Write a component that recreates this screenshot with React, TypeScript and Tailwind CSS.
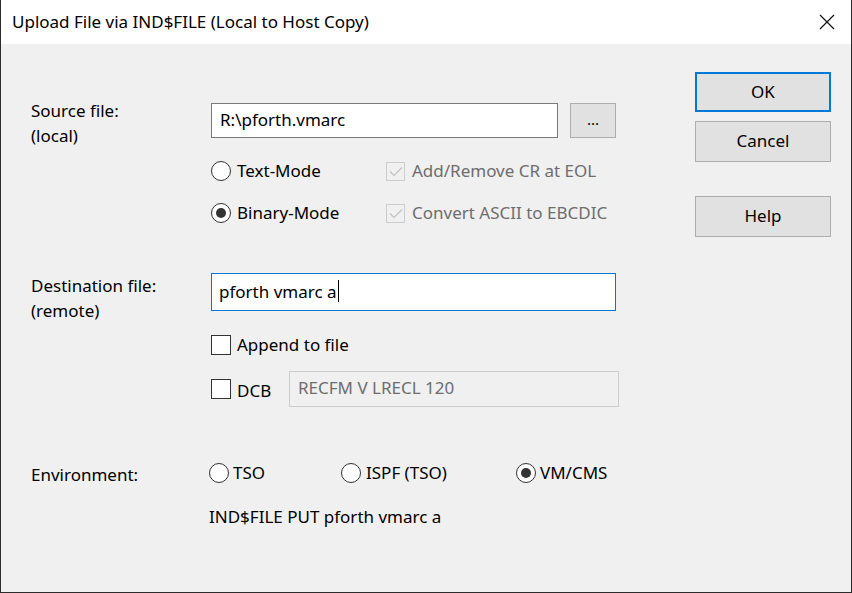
import React from "react";

function Radio({ checked }: { checked?: boolean }) {
  return (
    <span className="w-[20px] h-[20px] shrink-0 rounded-full border border-[#333333] bg-white flex items-center justify-center">
      {checked && <span className="w-[10px] h-[10px] rounded-full bg-[#333333]" />}
    </span>
  );
}

function Box() {
  return <span className="w-[20px] h-[20px] shrink-0 border border-[#333333] bg-white" />;
}

function DisabledCheck() {
  return (
    <span className="w-[19px] h-[19px] shrink-0 border border-[#cccccc] flex items-center justify-center">
      <svg width="14" height="11" viewBox="0 0 14 11">
        <path d="M1 5.5 L5 9.5 L13 1.5" stroke="#c2c2c2" strokeWidth="1.2" fill="none" />
      </svg>
    </span>
  );
}

function DlgButton({ label, focused }: { label: string; focused?: boolean }) {
  return (
    <button
      className={
        focused
          ? "w-[136px] h-[40px] pb-[2px] bg-[#e1e1e1] border-2 border-[#0078d7] text-black"
          : "w-[136px] h-[41px] pb-[2px] bg-[#e1e1e1] border border-[#adadad] text-black"
      }
    >
      {label}
    </button>
  );
}

export default function App() {
  return (
    <div className="w-[852px] h-[593px] flex flex-col border-x border-b border-[#2b2b2b] font-['Noto_Sans',sans-serif] text-[17px] leading-[25px] text-black">
      {/* Title bar */}
      <div className="h-[44px] bg-white flex items-center justify-between pl-[11px] pr-[16px] shrink-0">
        <span className="pb-[1px]">Upload File via IND$FILE (Local to Host Copy)</span>
        <svg width="16" height="16" viewBox="0 0 16 16">
          <path d="M1 1 L15 15 M15 1 L1 15" stroke="#111" strokeWidth="1.2" />
        </svg>
      </div>

      {/* Body */}
      <div className="flex-1 bg-[#f0f0f0] flex">
        <div className="flex-1 pl-[30px] pt-[54px] flex flex-col">
          {/* Source file */}
          <div className="flex">
            <div className="w-[180px] shrink-0">
              <div>Source file:</div>
              <div>(local)</div>
            </div>
            <div className="flex flex-col">
              <div className="flex mt-[5px]">
                <div className="w-[347px] h-[35px] pb-[3px] bg-white border border-[#7a7a7a] flex items-center px-[8px]">
                  R:\pforth.vmarc
                </div>
                <button className="ml-[12px] w-[46px] h-[35px] pb-[2px] bg-[#e1e1e1] border border-[#adadad] text-[15px]">...</button>
              </div>
              <div className="grid grid-cols-[175px_auto] gap-y-[22px] mt-[23px]">
                <div className="flex items-center gap-[6px] h-[20px]">
                  <Radio />
                  <span className="pb-[2px]">Text-Mode</span>
                </div>
                <div className="flex items-center gap-[7px] h-[20px] text-[#6d6d6d]">
                  <DisabledCheck />
                  <span className="pb-[2px]">Add/Remove CR at EOL</span>
                </div>
                <div className="flex items-center gap-[6px] h-[20px]">
                  <Radio checked />
                  <span className="pb-[2px]">Binary-Mode</span>
                </div>
                <div className="flex items-center gap-[7px] h-[20px] text-[#6d6d6d]">
                  <DisabledCheck />
                  <span className="pb-[2px]">Convert ASCII to EBCDIC</span>
                </div>
              </div>
            </div>
          </div>

          {/* Destination file */}
          <div className="flex mt-[50px]">
            <div className="w-[180px] shrink-0">
              <div>Destination file:</div>
              <div>(remote)</div>
            </div>
            <div className="flex flex-col">
              <div className="w-[405px] h-[38px] pb-[2px] bg-white border border-[#0078d7] flex items-center px-[7px]">
                <span>pforth vmarc a</span>
                <span className="w-px h-[22px] bg-black ml-[1px]" />
              </div>
              <div className="flex items-center gap-[6px] h-[20px] mt-[24px]">
                <Box />
                <span className="pb-[2px]">Append to file</span>
              </div>
              <div className="flex items-center mt-[16px]">
                <Box />
                <span className="ml-[6px] w-[52px] pt-[2px]">DCB</span>
                <div className="w-[330px] h-[36px] pb-[3px] border border-[#cccccc] flex items-center px-[8px] text-[#6d6d6d]">
                  RECFM V LRECL 120
                </div>
              </div>
            </div>
          </div>

          {/* Environment */}
          <div className="flex items-center mt-[56px] h-[20px]">
            <div className="w-[178px] shrink-0 mt-[3px]">Environment:</div>
            <div className="flex items-center gap-[4px] w-[132px]">
              <Radio />
              <span className="pb-[2px]">TSO</span>
            </div>
            <div className="flex items-center gap-[5px] w-[175px]">
              <Radio />
              <span className="pb-[2px]">ISPF (TSO)</span>
            </div>
            <div className="flex items-center gap-[4px]">
              <Radio checked />
              <span className="pb-[2px]">VM/CMS</span>
            </div>
          </div>
          <div className="ml-[178px] mt-[21px]">IND$FILE PUT pforth vmarc a</div>
        </div>

        {/* Buttons */}
        <div className="w-[136px] mr-[20px] pt-[28px] flex flex-col">
          <DlgButton label="OK" focused />
          <div className="mt-[9px]">
            <DlgButton label="Cancel" />
          </div>
          <div className="mt-[34px]">
            <DlgButton label="Help" />
          </div>
        </div>
      </div>
    </div>
  );
}
